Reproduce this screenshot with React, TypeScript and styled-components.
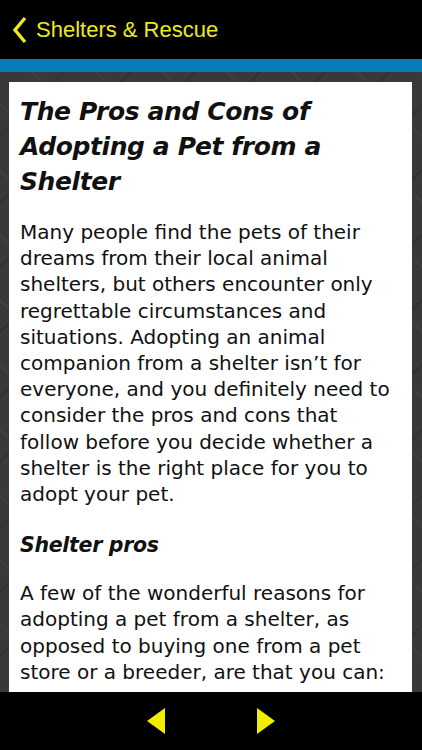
import styled, { createGlobalStyle } from "styled-components";

const Global = createGlobalStyle`
  html, body {
    margin: 0;
    padding: 0;
    background: #000;
  }
  * { box-sizing: border-box; }
`

const Screen = styled.div`
  width: 422px;
  height: 750px;
  display: flex;
  flex-direction: column;
  overflow: hidden;
  background: #000;
`

const TopBar = styled.div`
  height: 59px;
  display: flex;
  align-items: center;
  padding-left: 12px;
  gap: 8px;
  background: #000;
  color: #ecea1f;
  font-family: "Liberation Sans", Arial, sans-serif;
  font-size: 22px;
`

const Stripe = styled.div`
  height: 13px;
  background: #0a7db8;
`

const Backdrop = styled.div`
  flex: 1;
  min-height: 0;
  padding: 10px 10px 0 9px;
  background-color: #393939;
  background-image:
    repeating-linear-gradient(45deg, rgba(255,255,255,0.03) 0 2px, transparent 2px 46px),
    repeating-linear-gradient(-45deg, rgba(0,0,0,0.12) 0 2px, transparent 2px 46px);
  overflow: hidden;
`

const Page = styled.div`
  height: 100%;
  background: #fff;
  padding: 12px 10px 0 11px;
  color: #111;
  font-family: "DejaVu Sans", Verdana, sans-serif;
  overflow: hidden;
`

const Title = styled.h1`
  margin: 0 0 20px;
  font-size: 25px;
  line-height: 35px;
  letter-spacing: -0.4px;
  font-weight: bold;
  font-style: italic;
`

const Sub = styled.h2`
  margin: 0 0 22px;
  font-size: 20.5px;
  line-height: 26px;
  letter-spacing: -0.3px;
  font-weight: bold;
  font-style: italic;
`

const Para = styled.p`
  margin: 0 0 25px;
  font-size: 20px;
  line-height: 26.2px;
`

const BottomBar = styled.div`
  height: 58px;
  display: flex;
  justify-content: center;
  align-items: center;
  gap: 90px;
  background: #000;
`

const Arrow = styled.svg`
  width: 19px;
  height: 26px;
  filter: blur(0.4px);
`

export default function App() {
  return (
    <Screen>
      <Global />
      <TopBar>
        <svg width="16" height="28" viewBox="0 0 16 28">
          <polyline points="13,2 3,14 13,26" fill="none" stroke="#ecea1f" strokeWidth="3.4" />
        </svg>
        <span>Shelters &amp; Rescue</span>
      </TopBar>
      <Stripe />
      <Backdrop>
        <Page>
          <Title>The Pros and Cons of Adopting a Pet from a Shelter</Title>
          <Para>
            Many people find the pets of their dreams from their local animal shelters, but others encounter only
            regrettable circumstances and situations. Adopting an animal companion from a shelter isn’t for
            everyone, and you definitely need to consider the pros and cons that follow before you decide whether a
            shelter is the right place for you to adopt your pet.
          </Para>
          <Sub>Shelter pros</Sub>
          <Para>
            A few of the wonderful reasons for adopting a pet from a shelter, as opposed to buying one from a pet
            store or a breeder, are that you can:
          </Para>
        </Page>
      </Backdrop>
      <BottomBar>
        <Arrow viewBox="0 0 19 26">
          <polygon points="18,0 18,26 0,13" fill="#f2ee00" />
        </Arrow>
        <Arrow viewBox="0 0 19 26">
          <polygon points="1,0 1,26 19,13" fill="#f2ee00" />
        </Arrow>
      </BottomBar>
    </Screen>
  )
}
